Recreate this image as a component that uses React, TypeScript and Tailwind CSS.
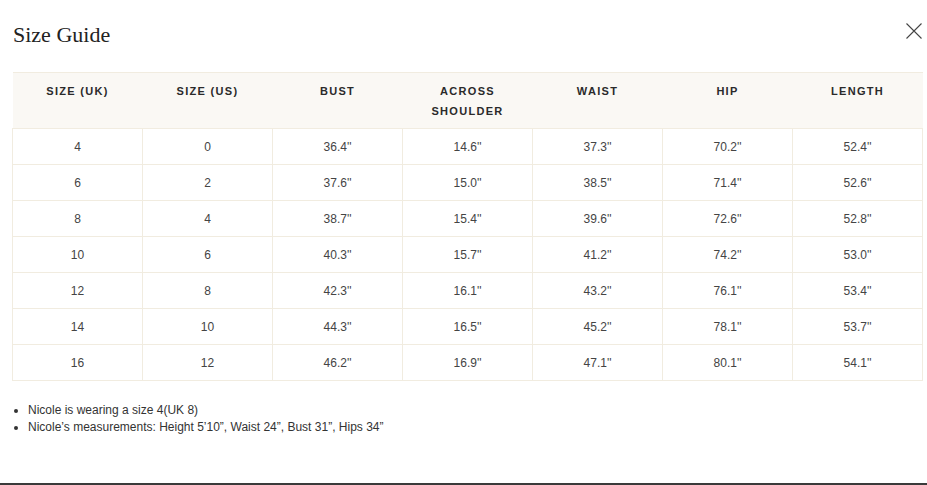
const headers = ["SIZE (UK)", "SIZE (US)", "BUST", "ACROSS SHOULDER", "WAIST", "HIP", "LENGTH"];

const rows = [
  ["4", "0", "36.4''", "14.6''", "37.3''", "70.2''", "52.4''"],
  ["6", "2", "37.6''", "15.0''", "38.5''", "71.4''", "52.6''"],
  ["8", "4", "38.7''", "15.4''", "39.6''", "72.6''", "52.8''"],
  ["10", "6", "40.3''", "15.7''", "41.2''", "74.2''", "53.0''"],
  ["12", "8", "42.3''", "16.1''", "43.2''", "76.1''", "53.4''"],
  ["14", "10", "44.3''", "16.5''", "45.2''", "78.1''", "53.7''"],
  ["16", "12", "46.2''", "16.9''", "47.1''", "80.1''", "54.1''"],
];

const App = () => {
  return (
    <div className="h-[485px] w-[927px] overflow-hidden border-b-2 border-[#3a3a3a] bg-white font-['Liberation_Sans',Arial,sans-serif]">
      {/* Header */}
      <div className="flex h-[72px] items-start justify-between pl-[13px] pr-[4px]">
        <h1 className="mt-[20px] font-['Liberation_Serif',serif] text-[22px] leading-[30px] text-[#222]">
          Size Guide
        </h1>
        <button className="mt-[22px] flex h-[18px] w-[18px] items-center justify-center text-[#444]">
          <svg width="16" height="16" viewBox="0 0 16 16" fill="none">
            <path d="M0.5 0.5L15.5 15.5M15.5 0.5L0.5 15.5" stroke="currentColor" strokeWidth="1.1" />
          </svg>
        </button>
      </div>

      {/* Table */}
      <div className="mx-[12px] w-[911px]">
        <table className="w-full table-fixed border-collapse">
          <thead>
            <tr className="bg-[#faf8f4]">
              {headers.map((h) => (
                <th
                  key={h}
                  className="h-[56px] border border-[#f1ece0] border-b-0 border-x-0 px-[22px] pt-[8px] align-top text-[11px] font-semibold leading-[20px] tracking-[1.3px] text-[#2a2a2a]"
                >
                  {h}
                </th>
              ))}
            </tr>
          </thead>
          <tbody>
            {rows.map((r, i) => (
              <tr key={i}>
                {r.map((c, j) => (
                  <td
                    key={j}
                    className="h-[36px] border border-[#f1ece0] p-0 text-center align-middle text-[12px] text-[#444]"
                  >
                    {c}
                  </td>
                ))}
              </tr>
            ))}
          </tbody>
        </table>
      </div>

      {/* Notes */}
      <ul className="mt-[21px] pl-[12px] text-[12px] leading-[17px] text-[#333]">
        <li className="flex items-center">
          <span className="mr-[10px] ml-[2px] h-[4px] w-[4px] rounded-full bg-[#333]" />
          Nicole is wearing a size 4(UK 8)
        </li>
        <li className="flex items-center">
          <span className="mr-[10px] ml-[2px] h-[4px] w-[4px] rounded-full bg-[#333]" />
          Nicole’s measurements: Height 5’10”, Waist 24”, Bust 31”, Hips 34”
        </li>
      </ul>
    </div>
  );
};

export default App;
